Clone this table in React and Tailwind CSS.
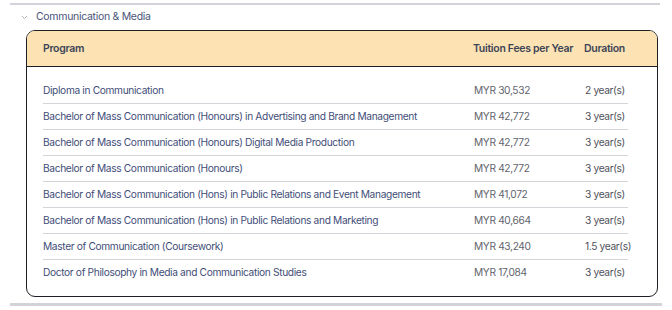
import React from 'react';

const programs = [
    { name: 'Diploma in Communication', fee: 'MYR 30,532', duration: '2 year(s)' },
    { name: 'Bachelor of Mass Communication (Honours) in Advertising and Brand Management', fee: 'MYR 42,772', duration: '3 year(s)' },
    { name: 'Bachelor of Mass Communication (Honours) Digital Media Production', fee: 'MYR 42,772', duration: '3 year(s)' },
    { name: 'Bachelor of Mass Communication (Honours)', fee: 'MYR 42,772', duration: '3 year(s)' },
    { name: 'Bachelor of Mass Communication (Hons) in Public Relations and Event Management', fee: 'MYR 41,072', duration: '3 year(s)' },
    { name: 'Bachelor of Mass Communication (Hons) in Public Relations and Marketing', fee: 'MYR 40,664', duration: '3 year(s)' },
    { name: 'Master of Communication (Coursework)', fee: 'MYR 43,240', duration: '1.5 year(s)' },
    { name: 'Doctor of Philosophy in Media and Communication Studies', fee: 'MYR 17,084', duration: '3 year(s)' },
];

const App = () => {
    return (
        <div className="w-[672px] h-[310px] bg-white pt-[3px] font-['Inter',sans-serif]">
            <div className="mx-[10px] w-[650px] h-[2px] bg-[#d1d3d8]" />

            {/* --- Section toggle --- */}
            <div className="flex items-center h-[22px] pl-[21px] mt-[1px]">
                <svg width="7" height="5" viewBox="0 0 7 5" className="mt-[1px]">
                    <path d="M1 1 L3.5 3.5 L6 1" fill="none" stroke="#a3a8b3" strokeWidth="0.9" />
                </svg>
                <span className="ml-[8px] text-[10.5px] text-[#4a5478] tracking-[-0.3px]">Communication &amp; Media</span>
            </div>

            {/* --- Fees table --- */}
            <div className="ml-[26px] mt-[2px] w-[632px] h-[267px] border-[1.3px] border-[#1d1f24] rounded-[9px] overflow-hidden">
                <div className="grid grid-cols-[430px_111px_60px] h-[36px] items-center pl-[16px] bg-[#fde2b3] border-b-[1.3px] border-[#1d1f24] text-[10.5px] font-semibold text-[#3c4557] tracking-[-0.3px] whitespace-nowrap">
                    <div>Program</div>
                    <div>Tuition Fees per Year</div>
                    <div>Duration</div>
                </div>
                <div className="pl-[16px] pr-[29px] pt-[11px]">
                    {programs.map((p, i) => (
                        <div
                            key={i}
                            className={`grid grid-cols-[431px_111px_1fr] items-center h-[26px] text-[10.2px] tracking-[-0.35px] whitespace-nowrap ${i < programs.length - 1 ? 'border-b border-[#d4d5da]' : ''}`}
                        >
                            <div className="text-[#3f4d78]">{p.name}</div>
                            <div className="text-[#62646c]">{p.fee}</div>
                            <div className="text-[#4f525b]">{p.duration}</div>
                        </div>
                    ))}
                </div>
            </div>

            <div className="mx-[10px] mt-[6px] w-[652px] h-[3px] bg-[#d1d3d8]" />
        </div>
    );
};

export default App;
